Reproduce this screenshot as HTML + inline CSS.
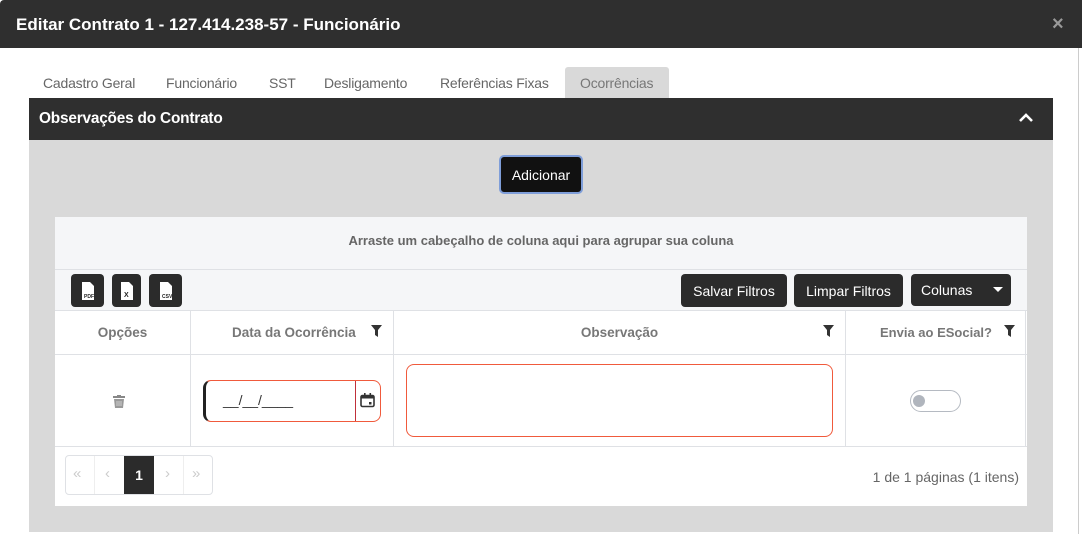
<!DOCTYPE html>
<html><head><meta charset="utf-8"><style>
*{box-sizing:border-box;margin:0;padding:0}
body{width:1082px;height:534px;overflow:hidden;background:#fff;font-family:"Liberation Sans",sans-serif;position:relative}
.abs{position:absolute}
.hdr{left:0;top:0;width:1082px;height:48px;background:#2f2f2f;border-top-left-radius:4px}
.hdr .t{left:16px;top:15px;color:#fff;font-weight:bold;font-size:17px;letter-spacing:0}
.tab{top:75px;font-size:14px;color:#666;letter-spacing:-0.2px}
.btn{background:#2b2b2b;color:#fff;font-size:14px;border-radius:4px;display:flex;align-items:center;justify-content:center}
.th{top:310px;height:44px;font-size:13.5px;color:#777;font-weight:bold;display:flex;align-items:center;justify-content:center}
.vl{width:1px;background:#dfe1e5}
.hl{height:1px;background:#dfe1e5}
</style></head><body>
<div class="abs hdr"><div class="abs t">Editar Contrato 1 - 127.414.238-57 - Funcionário</div>
<div class="abs" style="left:1052px;top:13px;color:#999;font-size:20px;font-weight:bold">×</div></div>
<div class="abs" style="left:1078px;top:48px;width:1px;height:486px;background:#ccc"></div>

<div class="abs tab" style="left:43px">Cadastro Geral</div>
<div class="abs tab" style="left:166px">Funcionário</div>
<div class="abs tab" style="left:269px">SST</div>
<div class="abs tab" style="left:324px">Desligamento</div>
<div class="abs tab" style="left:440px">Referências Fixas</div>
<div class="abs" style="left:565px;top:67px;width:104px;height:31px;background:#d9d9d9;border-radius:3px 3px 0 0"></div>
<div class="abs tab" style="left:580px;color:#777">Ocorrências</div>

<div class="abs" style="left:29px;top:98px;width:1024px;height:42px;background:#2f2f2f"></div>
<div class="abs" style="left:39px;top:110px;color:#fff;font-weight:bold;font-size:15.4px;letter-spacing:-0.2px">Observações do Contrato</div>
<svg class="abs" style="left:1018px;top:112px" width="16" height="12"><path d="M2 9 L8 3 L14 9" stroke="#fff" stroke-width="2.6" fill="none"/></svg>
<div class="abs" style="left:29px;top:140px;width:1024px;height:392px;background:#d9d9d9"></div>

<div class="abs btn" style="left:499px;top:155px;width:84px;height:39px;background:#111;border:2px solid #7f9ed9;border-radius:5px">Adicionar</div>

<div class="abs" style="left:55px;top:217px;width:972px;height:289px;background:#fff"></div>
<div class="abs" style="left:55px;top:217px;width:972px;height:93px;background:#f5f6f8"></div>
<div class="abs hl" style="left:55px;top:269px;width:972px"></div>
<div class="abs" style="left:55px;top:233px;width:972px;text-align:center;font-size:13px;color:#666;font-weight:bold">Arraste um cabeçalho de coluna aqui para agrupar sua coluna</div>

<div class="abs btn" style="left:71px;top:274px;width:33px;height:33px"><svg width="16" height="20"><path d="M2 1h8l4 4v14H2z" fill="#fff"/><text x="4" y="17" font-size="5" fill="#222" font-family="Liberation Sans" font-weight="bold">PDF</text></svg></div>
<div class="abs btn" style="left:112px;top:274px;width:29px;height:33px"><svg width="16" height="20"><path d="M2 1h8l4 4v14H2z" fill="#fff"/><text x="5" y="16" font-size="7" fill="#222" font-family="Liberation Sans" font-weight="bold">X</text></svg></div>
<div class="abs btn" style="left:149px;top:274px;width:33px;height:33px"><svg width="16" height="20"><path d="M2 1h8l4 4v14H2z" fill="#fff"/><text x="4" y="17" font-size="5" fill="#222" font-family="Liberation Sans" font-weight="bold">CSV</text></svg></div>

<div class="abs btn" style="left:681px;top:274px;width:106px;height:33px">Salvar Filtros</div>
<div class="abs btn" style="left:794px;top:274px;width:109px;height:33px">Limpar Filtros</div>
<div class="abs btn" style="left:911px;top:274px;width:100px;height:32px;justify-content:flex-start;padding-left:10px">Colunas<svg style="margin-left:21px" width="10" height="6"><path d="M0 0h10L5 5z" fill="#fff"/></svg></div>

<div class="abs hl" style="left:55px;top:310px;width:972px"></div>
<div class="abs hl" style="left:55px;top:354px;width:972px"></div>
<div class="abs hl" style="left:55px;top:446px;width:972px"></div>
<div class="abs vl" style="left:190px;top:310px;height:136px"></div>
<div class="abs vl" style="left:393px;top:310px;height:136px"></div>
<div class="abs vl" style="left:845px;top:310px;height:136px"></div>
<div class="abs vl" style="left:1025px;top:310px;height:136px"></div>

<div class="abs th" style="left:55px;width:135px">Opções</div>
<div class="abs th" style="left:191px;width:202px;justify-content:flex-start;padding-left:41px">Data da Ocorrência</div>
<div class="abs th" style="left:394px;width:451px">Observação</div>
<div class="abs th" style="left:846px;width:179px;justify-content:flex-start;padding-left:34px;font-size:13px">Envia ao ESocial?</div>
<svg class="abs" style="left:371px;top:325px" width="11" height="12"><path d="M0 0h11L7 5v7L4 10V5z" fill="#333"/></svg>
<svg class="abs" style="left:823px;top:325px" width="11" height="12"><path d="M0 0h11L7 5v7L4 10V5z" fill="#333"/></svg>
<svg class="abs" style="left:1004px;top:325px" width="11" height="12"><path d="M0 0h11L7 5v7L4 10V5z" fill="#333"/></svg>

<svg class="abs" style="left:113px;top:395px" width="12" height="13"><rect x="0" y="1" width="12" height="2" fill="#888"/><rect x="4" y="0" width="4" height="2" fill="#888"/><path d="M1 4h10l-1 9H2z" fill="#999"/><path d="M4 6v5M6 6v5M8 6v5" stroke="#ddd" stroke-width="0.8"/></svg>

<div class="abs" style="left:203px;top:380px;width:178px;height:42px;border:1px solid #f05a3c;border-left:3px solid #222;border-radius:8px"></div>
<div class="abs" style="left:355px;top:381px;width:1px;height:40px;background:#c0303a"></div>
<div class="abs" style="left:223px;top:392px;font-size:14px;color:#333;letter-spacing:0px">__/__/____</div>
<svg class="abs" style="left:360px;top:393px" width="15" height="15"><rect x="1" y="2.5" width="13" height="11" rx="1.5" fill="none" stroke="#333" stroke-width="1.6"/><rect x="1" y="2.5" width="13" height="3" fill="#333"/><rect x="4" y="0" width="1.6" height="3" fill="#333"/><rect x="9.5" y="0" width="1.6" height="3" fill="#333"/><rect x="9" y="9" width="2.5" height="2.5" fill="#333"/></svg>

<div class="abs" style="left:406px;top:364px;width:427px;height:73px;border:1px solid #f05a3c;border-radius:8px"></div>

<div class="abs" style="left:910px;top:390px;width:51px;height:22px;border:1px solid #b5bac2;border-radius:11px"></div>
<div class="abs" style="left:913px;top:395px;width:12px;height:12px;border-radius:50%;background:#b0b5bd"></div>

<div class="abs" style="left:65px;top:455px;width:148px;height:40px;border:1px solid #dfe1e5;border-radius:4px"></div>
<div class="abs vl" style="left:94px;top:456px;height:38px;background:#eee"></div>
<div class="abs vl" style="left:183px;top:456px;height:38px;background:#eee"></div>
<div class="abs" style="left:124px;top:456px;width:30px;height:38px;background:#2b2b2b;color:#fff;font-weight:bold;font-size:14px;display:flex;align-items:center;justify-content:center">1</div>
<div class="abs" style="left:73px;top:465px;color:#ccc;font-size:15px">«</div>
<div class="abs" style="left:105px;top:465px;color:#ccc;font-size:15px">‹</div>
<div class="abs" style="left:165px;top:465px;color:#ccc;font-size:15px">›</div>
<div class="abs" style="left:192px;top:465px;color:#ccc;font-size:15px">»</div>
<div class="abs" style="left:800px;top:469px;width:219px;text-align:right;font-size:14px;color:#666">1 de 1 páginas (1 itens)</div>
</body></html>
